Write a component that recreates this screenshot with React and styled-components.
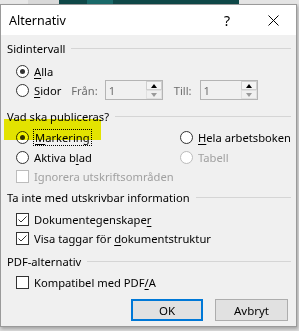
import React from "react";
import styled, { createGlobalStyle } from "styled-components";

const Global = createGlobalStyle`
  html, body { margin: 0; padding: 0; }
  body {
    width: 299px; height: 331px; overflow: hidden;
    background: #e4e4e4;
    font-family: "Segoe UI", "Noto Sans", "Liberation Sans", sans-serif;
  }
`;

const Screen = styled.div`
  width: 299px;
  height: 331px;
  display: flex;
  flex-direction: column;
  background: #dcdcdc;
`;

const Backdrop = styled.div`
  height: 4px;
  display: flex;
  flex: none;
`;

const BackSeg = styled.div`
  width: ${(p) => p.$w}px;
  background: ${(p) => p.$c};
`;

const Dialog = styled.div`
  width: 295px;
  height: 321px;
  border: 1px solid #9a9a9a;
  background: #f0f0f0;
  display: flex;
  flex-direction: column;
  box-shadow: 1px 2px 3px rgba(0, 0, 0, 0.25);
  font-size: 11.2px;
  color: #000;
`;

const TitleBar = styled.div`
  height: 30px;
  background: #fff;
  display: flex;
  align-items: center;
  padding-left: 8px;
  flex: none;
`;

const Title = styled.div`
  flex: 1;
  font-size: 12.5px;
  padding-top: 1px;
`;

const TitleBtn = styled.div`
  width: 46px;
  height: 30px;
  display: flex;
  align-items: center;
  justify-content: center;
  font-size: 14px;
`;

const Body = styled.div`
  flex: 1;
  display: flex;
  flex-direction: column;
  padding: 5px 5px 0 6px;
`;

const SectionHeader = styled.div`
  height: 16px;
  display: flex;
  align-items: center;
  margin-top: ${(p) => p.$mt || 0}px;
  &::after {
    content: "";
    flex: 1;
    height: 1px;
    background: #d5d5d5;
    margin-left: 6px;
    margin-top: 1px;
  }
`;

const Indent = styled.div`
  padding-left: 9px;
  display: flex;
  flex-direction: column;
`;

const Row = styled.div`
  height: ${(p) => p.$h || 18}px;
  margin-top: ${(p) => p.$mt || 0}px;
  display: flex;
  align-items: center;
`;

const Grid = styled.div`
  display: grid;
  grid-template-columns: 164px 1fr;
  grid-auto-rows: 20px;
  align-items: center;
  margin-top: ${(p) => p.$mt || 0}px;
`;

const Option = styled.label`
  display: flex;
  align-items: center;
  gap: 5px;
  color: ${(p) => (p.$disabled ? "#a0a0a0" : "#000")};
  position: relative;
  white-space: nowrap;
`;

const Highlight = styled.span`
  position: absolute;
  left: -12px;
  top: -11px;
  width: 97px;
  height: 21px;
  background: #f2f200;
  mix-blend-mode: multiply;
  pointer-events: none;
`;

const RadioCircle = styled.span`
  width: 11px;
  height: 11px;
  border-radius: 50%;
  border: 1px solid ${(p) => (p.$disabled ? "#bcbcbc" : "#333")};
  background: #fff;
  display: flex;
  align-items: center;
  justify-content: center;
  flex: none;
  &::after {
    content: "";
    width: 5px;
    height: 5px;
    border-radius: 50%;
    background: #333;
    display: ${(p) => (p.$checked ? "block" : "none")};
  }
`;

const Box = styled.span`
  width: 11px;
  height: 11px;
  border: 1px solid ${(p) => (p.$disabled ? "#bcbcbc" : "#333")};
  background: #fff;
  flex: none;
  display: flex;
`;

const Focus = styled.span`
  outline: 1px dotted #000;
  outline-offset: 0px;
  padding: 0 1px;
`;

const U = styled.span`
  text-decoration: underline;
  text-underline-offset: 2px;
`;

const GreyLabel = styled.span`
  color: #6d6d6d;
  margin: 0 ${(p) => p.$mr}px 0 ${(p) => p.$ml}px;
`;

const Spin = styled.div`
  width: 56px;
  height: 18px;
  border: 1px solid #b4b4b4;
  background: #f0f0f0;
  display: flex;
`;

const SpinValue = styled.div`
  flex: 1;
  color: #6d6d6d;
  padding: 2px 0 0 3px;
  line-height: 16px;
`;

const SpinBtns = styled.div`
  width: 16px;
  display: flex;
  flex-direction: column;
`;

const SpinBtn = styled.div`
  flex: 1;
  display: flex;
  align-items: center;
  justify-content: center;
  border: 1px solid ${(p) => (p.$up ? "#cfcfcf" : "#e0e0e0")};
  background: ${(p) => (p.$up ? "#f4f4f4" : "#f0f0f0")};
`;

const Arrow = styled.span`
  width: 0;
  height: 0;
  border-left: 3.5px solid transparent;
  border-right: 3.5px solid transparent;
  ${(p) =>
    p.$up
      ? "border-bottom: 4px solid #000;"
      : "border-top: 4px solid #9a9a9a;"}
`;

const Buttons = styled.div`
  display: flex;
  justify-content: flex-end;
  gap: 12px;
  margin-top: 8px;
  padding-right: 3px;
`;

const Button = styled.button`
  width: ${(p) => p.$w}px;
  height: 22px;
  font: inherit;
  font-size: 11.5px;
  color: #000;
  background: #e1e1e1;
  border: ${(p) => (p.$default ? "2px solid #0078d7" : "1px solid #adadad")};
  padding: 0;
  margin: 0;
`;

const Check = () => (
  <svg width="11" height="11" viewBox="0 0 11 11">
    <path d="M1.5 5.5 L4 8 L9.5 2.5" fill="none" stroke="#333" strokeWidth="1" />
  </svg>
);

const Radio = ({ checked, disabled, children, highlight, focus }) => (
  <Option $disabled={disabled}>
    {highlight && <Highlight />}
    <RadioCircle $checked={checked} $disabled={disabled} />
    {focus ? <Focus>{children}</Focus> : <span>{children}</span>}
  </Option>
);

const CheckBox = ({ checked, disabled, children }) => (
  <Option $disabled={disabled}>
    <Box $disabled={disabled}>{checked && <Check />}</Box>
    <span>{children}</span>
  </Option>
);

const SpinBox = () => (
  <Spin>
    <SpinValue>1</SpinValue>
    <SpinBtns>
      <SpinBtn $up>
        <Arrow $up />
      </SpinBtn>
      <SpinBtn>
        <Arrow />
      </SpinBtn>
    </SpinBtns>
  </Spin>
);

export default function App() {
  return (
    <>
      <Global />
      <Screen>
        <Backdrop>
          <BackSeg $w={28} $c="#e8e8e8" />
          <BackSeg $w={31} $c="#d9d9d9" />
          <BackSeg $w={28} $c="#0f4848" />
          <BackSeg $w={26} $c="#1a6a6a" />
          <BackSeg $w={126} $c="#0f4848" />
          <BackSeg $w={60} $c="#e4e4e4" />
        </Backdrop>
        <Dialog>
          <TitleBar>
            <Title>Alternativ</Title>
            <TitleBtn>?</TitleBtn>
            <TitleBtn>
              <svg width="11" height="11" viewBox="0 0 11 11">
                <path d="M0.5 0.5 L10.5 10.5 M10.5 0.5 L0.5 10.5" stroke="#000" strokeWidth="1" />
              </svg>
            </TitleBtn>
          </TitleBar>
          <Body>
            <SectionHeader>Sidintervall</SectionHeader>
            <Indent>
              <Row $mt={6}>
                <Radio checked>
                  <U>A</U>lla
                </Radio>
              </Row>
              <Row $h={20}>
                <Radio>
                  <U>S</U>idor
                </Radio>
                <GreyLabel $ml={10} $mr={7}>Från:</GreyLabel>
                <SpinBox />
                <GreyLabel $ml={11} $mr={8}>Till:</GreyLabel>
                <SpinBox />
              </Row>
            </Indent>

            <SectionHeader $mt={8}>Vad ska publiceras?</SectionHeader>
            <Indent>
              <Grid $mt={3}>
                <Radio checked highlight focus>
                  <U>M</U>arkering
                </Radio>
                <Radio>
                  <U>H</U>ela arbetsboken
                </Radio>
                <Radio>
                  Aktiva b<U>l</U>ad
                </Radio>
                <Radio disabled>Tabell</Radio>
              </Grid>
              <Row>
                <CheckBox disabled>Ignorera utskriftsområden</CheckBox>
              </Row>
            </Indent>

            <SectionHeader $mt={4}>Ta inte med utskrivbar information</SectionHeader>
            <Indent>
              <Row $mt={5}>
                <CheckBox checked>
                  Dokumentegenskape<U>r</U>
                </CheckBox>
              </Row>
              <Row $mt={1}>
                <CheckBox checked>
                  Visa taggar för <U>d</U>okumentstruktur
                </CheckBox>
              </Row>
            </Indent>

            <SectionHeader $mt={6}>PDF-alternativ</SectionHeader>
            <Indent>
              <Row $mt={4}>
                <CheckBox>
                  Kompatibel med PDF<U>/</U>A
                </CheckBox>
              </Row>
            </Indent>

            <Buttons>
              <Button $default $w={72}>OK</Button>
              <Button $w={73}>Avbryt</Button>
            </Buttons>
          </Body>
        </Dialog>
      </Screen>
    </>
  );
}
